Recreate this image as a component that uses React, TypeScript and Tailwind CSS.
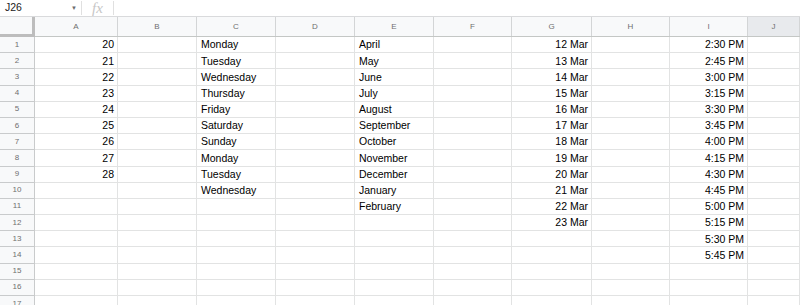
import React from 'react';

const cols = [
  { key: 'A', w: 'w-[83px]' },
  { key: 'B', w: 'w-[79px]' },
  { key: 'C', w: 'w-[79px]' },
  { key: 'D', w: 'w-[79px]' },
  { key: 'E', w: 'w-[79px]' },
  { key: 'F', w: 'w-[78px]' },
  { key: 'G', w: 'w-[80px]' },
  { key: 'H', w: 'w-[78px]' },
  { key: 'I', w: 'w-[78px]' },
  { key: 'J', w: 'flex-1' },
];

const nums = ['20', '21', '22', '23', '24', '25', '26', '27', '28'];
const days = ['Monday', 'Tuesday', 'Wednesday', 'Thursday', 'Friday', 'Saturday', 'Sunday', 'Monday', 'Tuesday', 'Wednesday'];
const months = ['April', 'May', 'June', 'July', 'August', 'September', 'October', 'November', 'December', 'January', 'February'];
const dates = ['12 Mar', '13 Mar', '14 Mar', '15 Mar', '16 Mar', '17 Mar', '18 Mar', '19 Mar', '20 Mar', '21 Mar', '22 Mar', '23 Mar'];
const times = ['2:30 PM', '2:45 PM', '3:00 PM', '3:15 PM', '3:30 PM', '3:45 PM', '4:00 PM', '4:15 PM', '4:30 PM', '4:45 PM', '5:00 PM', '5:15 PM', '5:30 PM', '5:45 PM'];

const cellValue = (col: string, r: number) => {
  switch (col) {
    case 'A': return { v: nums[r], right: true };
    case 'C': return { v: days[r], right: false };
    case 'E': return { v: months[r], right: false };
    case 'G': return { v: dates[r], right: true };
    case 'I': return { v: times[r], right: true };
    default: return { v: undefined, right: false };
  }
};

export default function App() {
  const rows = Array.from({ length: 17 }, (_, i) => i);

  return (
    <div className="w-[800px] h-[305px] overflow-hidden bg-white font-['Liberation_Sans',Arial,sans-serif] text-black">
      {/* formula bar */}
      <div className="h-[17px] flex items-center border-b border-[#d9dadc] text-[10.5px]">
        <span className="w-[71px] pl-[5px] text-[#222]">J26</span>
        <span className="w-[10px] text-[6px] text-[#6b6b6b]">▼</span>
        <div className="w-px h-[14px] bg-[#e0e0e0]" />
        <span className="w-[31px] text-center italic font-['Liberation_Serif',serif] text-[15px] text-[#c6c6c6] leading-none">fx</span>
        <div className="w-px h-[14px] bg-[#e0e0e0]" />
      </div>

      {/* column headers */}
      <div className="flex h-[20px] bg-[#f8f9fa] border-b border-[#c4c7c5]">
        <div className="w-[35px] shrink-0 border-r-[3px] border-b-[3px] border-[#bdbdbd] -mb-px bg-[#f8f9fa]" />
        {cols.map((c) => (
          <div
            key={c.key}
            className={`${c.w} shrink-0 flex items-center justify-center text-[8px] text-[#6f6f6f] border-r border-[#d3d5d6] ${c.key === 'J' ? 'bg-[#e8eaed]' : ''}`}
          >
            {c.key}
          </div>
        ))}
      </div>

      {rows.map((r) => (
        <div key={r} className="flex h-[16.2px]">
          <div className="w-[35px] shrink-0 bg-[#f8f9fa] border-r border-b border-[#c9cbcc] flex items-center justify-center text-[8px] text-[#6f6f6f]">
            {r + 1}
          </div>
          {cols.map((c) => {
            const { v, right } = cellValue(c.key, r);
            return (
              <div
                key={c.key}
                className={`${c.w} shrink-0 border-r border-b border-[#e2e3e3] flex items-center text-[10.5px] leading-none ${right ? 'justify-end pr-[3px]' : 'pl-[4px]'}`}
              >
                {v}
              </div>
            );
          })}
        </div>
      ))}
    </div>
  );
}
